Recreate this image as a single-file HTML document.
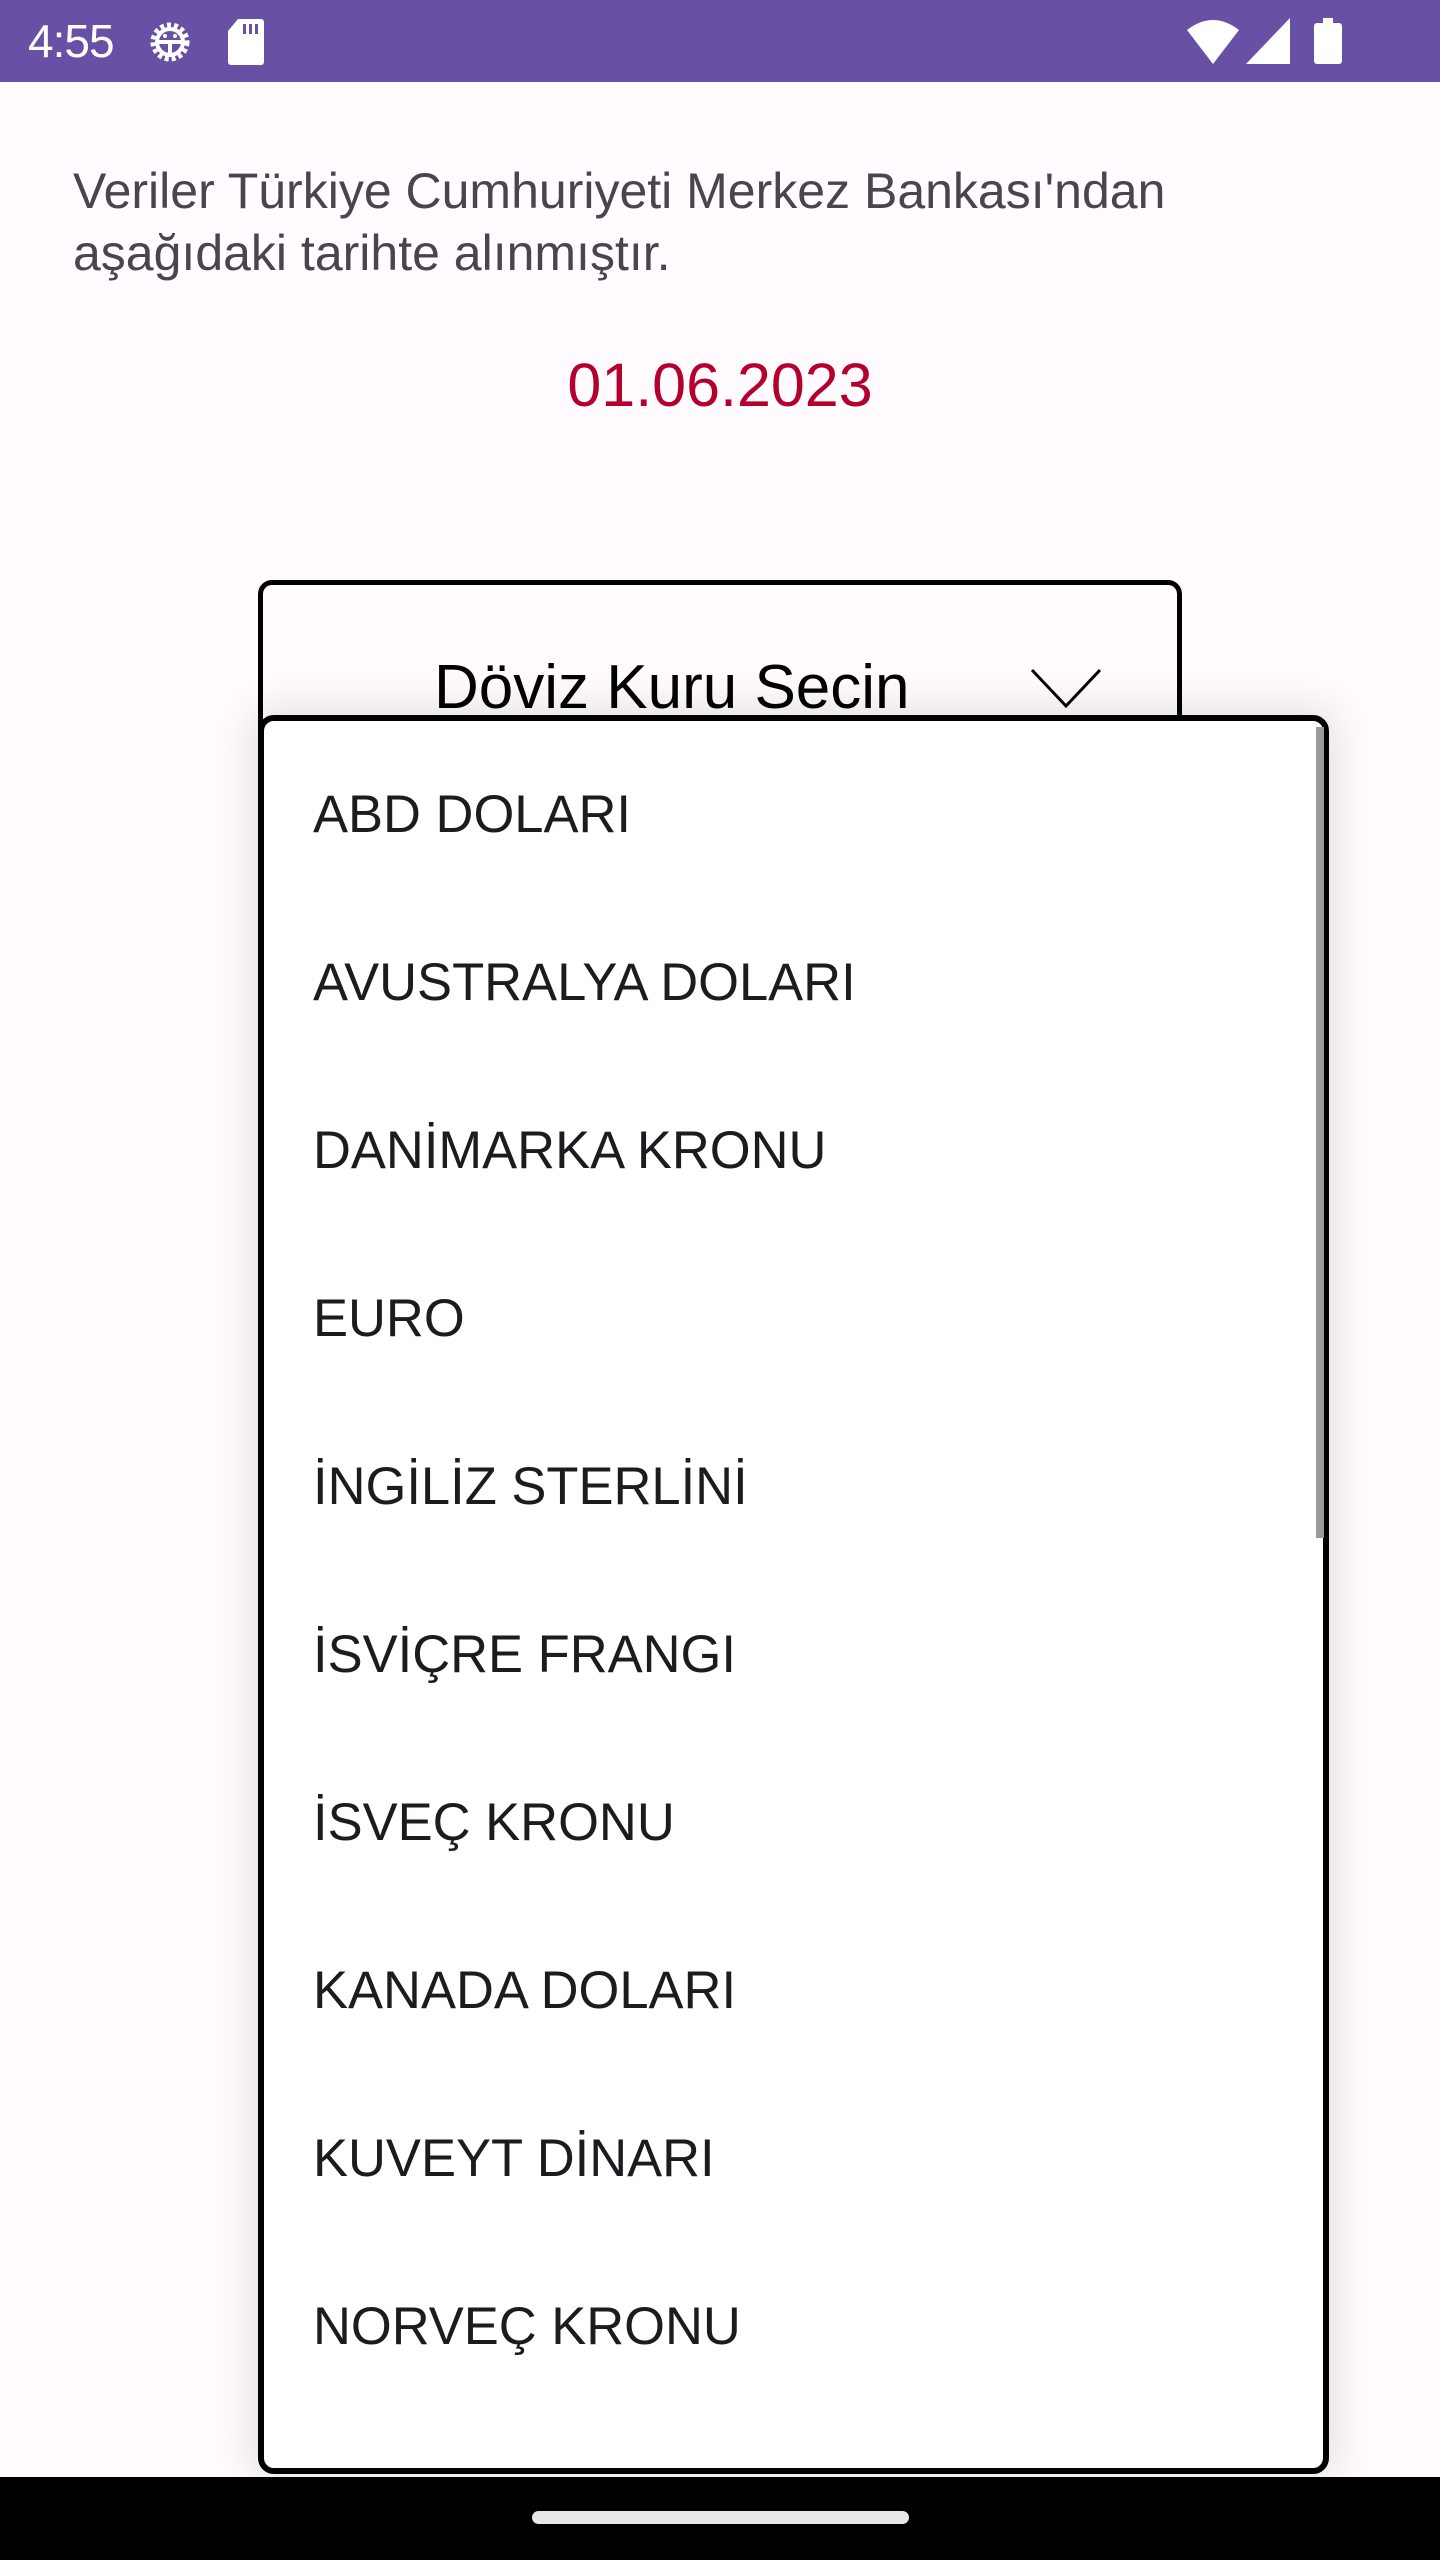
<!DOCTYPE html>
<html><head><meta charset="utf-8"><style>
*{margin:0;padding:0;box-sizing:border-box}
html,body{width:1440px;height:2560px;overflow:hidden;background:#fffbfe;font-family:"Liberation Sans",Roboto,sans-serif;position:relative}
.abs{position:absolute}
#sb{left:0;top:0;width:1440px;height:82px;background:#6851a5}
#time{left:28px;top:14px;color:#fff;font-size:46px;letter-spacing:-1px}
#info{left:73px;top:160px;width:1180px;color:#49454f;font-size:50px;line-height:62px}
#date{left:0;width:1440px;top:350px;text-align:center;color:#b3002c;font-size:61px}
#spin{left:258px;top:580px;width:924px;height:240px;border:5px solid #000;border-radius:14px}
#spintxt{left:434px;top:652px;font-size:62px;color:#000}
#pop{left:258px;top:715px;width:1071px;height:1759px;background:#fff;border:6px solid #000;border-radius:16px;box-shadow:0 0 40px 10px rgba(0,0,0,0.10)}
#scroll{left:1316px;top:727px;width:8px;height:811px;background:#9a9a9a}
.it{position:absolute;left:313px;font-size:52.5px;color:#1d1b20;line-height:60px}
#nav{left:0;top:2477px;width:1440px;height:83px;background:#000}
#handle{left:532px;top:2511px;width:377px;height:13px;border-radius:7px;background:#e8e8e8}
</style></head><body>
<div id="sb" class="abs"></div>
<div id="time" class="abs">4:55</div>
<svg class="abs" style="left:145px;top:16px" width="50" height="52" viewBox="0 0 50 52">
<circle cx="25" cy="26" r="17" fill="none" stroke="#fff" stroke-width="5" stroke-dasharray="4 3"/>
<circle cx="25" cy="26" r="13" fill="none" stroke="#fff" stroke-width="4"/>
<line x1="12" y1="26" x2="38" y2="26" stroke="#fff" stroke-width="4"/>
<line x1="25" y1="26" x2="25" y2="40" stroke="#fff" stroke-width="4"/>
<circle cx="20" cy="20" r="2" fill="#fff"/><circle cx="30" cy="20" r="2" fill="#fff"/>
</svg>
<svg class="abs" style="left:228px;top:19px" width="36" height="46" viewBox="0 0 36 46">
<path d="M10 0H33a3 3 0 0 1 3 3V43a3 3 0 0 1-3 3H3a3 3 0 0 1-3-3V12Z" fill="#fff"/>
<rect x="15" y="5" width="3" height="10" fill="#6851a5"/><rect x="21" y="5" width="3" height="10" fill="#6851a5"/><rect x="27" y="5" width="3" height="10" fill="#6851a5"/>
</svg>
<svg class="abs" style="left:1187px;top:18px" width="52" height="46" viewBox="0 0 52 46">
<path d="M0 12Q26 -8 52 12L26 46Z" fill="#fff"/>
</svg>
<svg class="abs" style="left:1246px;top:18px" width="44" height="46" viewBox="0 0 44 46"><path d="M44 0V46H0Z" fill="#fff"/></svg>
<svg class="abs" style="left:1314px;top:18px" width="28" height="46" viewBox="0 0 28 46"><rect x="9" y="0" width="10" height="6" fill="#fff"/><rect x="0" y="5" width="28" height="41" rx="3" fill="#fff"/></svg>

<div id="info" class="abs">Veriler Türkiye Cumhuriyeti Merkez Bankası'ndan<br>aşağıdaki tarihte alınmıştır.</div>
<div id="date" class="abs">01.06.2023</div>
<div id="spin" class="abs"></div>
<div id="spintxt" class="abs">Döviz Kuru Secin</div>
<svg class="abs" style="left:1030px;top:668px" width="72" height="42" viewBox="0 0 72 42"><path d="M2 2L36 38L70 2" fill="none" stroke="#000" stroke-width="3"/></svg>
<div id="pop" class="abs"></div>
<div id="scroll" class="abs"></div>
<div class="it" style="top:785px">ABD DOLARI</div>
<div class="it" style="top:953px">AVUSTRALYA DOLARI</div>
<div class="it" style="top:1121px">DANİMARKA KRONU</div>
<div class="it" style="top:1289px">EURO</div>
<div class="it" style="top:1457px">İNGİLİZ STERLİNİ</div>
<div class="it" style="top:1625px">İSVİÇRE FRANGI</div>
<div class="it" style="top:1793px">İSVEÇ KRONU</div>
<div class="it" style="top:1961px">KANADA DOLARI</div>
<div class="it" style="top:2129px">KUVEYT DİNARI</div>
<div class="it" style="top:2297px">NORVEÇ KRONU</div>
<div id="nav" class="abs"></div>
<div id="handle" class="abs"></div>
</body></html>
